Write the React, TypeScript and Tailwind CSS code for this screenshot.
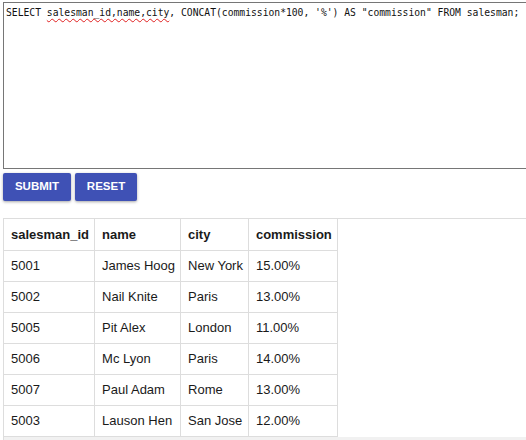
import React from "react";

const rows = [
  ["5001", "James Hoog", "New York", "15.00%"],
  ["5002", "Nail Knite", "Paris", "13.00%"],
  ["5005", "Pit Alex", "London", "11.00%"],
  ["5006", "Mc Lyon", "Paris", "14.00%"],
  ["5007", "Paul Adam", "Rome", "13.00%"],
  ["5003", "Lauson Hen", "San Jose", "12.00%"],
];

export default function App() {
  return (
    <div className="w-[526px] h-[440px] overflow-hidden bg-white" style={{ fontFamily: '"Liberation Sans", Arial, sans-serif' }}>
      <div className="pt-[2px] pl-[3px]">
        <div
          className="h-[167px] w-[560px] border border-[#767676] px-[2px] pt-[4px] text-[9.7px] leading-[11px] text-[#111] whitespace-pre"
          style={{ fontFamily: '"DejaVu Sans Mono", "Liberation Mono", monospace' }}
        >
          {"SELECT "}
          <span className="underline decoration-wavy decoration-[#e02020] decoration-[1px] underline-offset-[2px]">salesman_id,name,city</span>
          {", CONCAT(commission*100, '%') AS \"commission\" FROM salesman;"}
        </div>
        <div className="flex gap-[4px] mt-[4px]">
          <button className="h-[28px] w-[68px] rounded-[2px] bg-[#3f51b5] text-white text-[11.5px] font-bold shadow-[0_1px_3px_rgba(0,0,0,0.35)]" style={{ fontFamily: '"Liberation Sans", Arial, sans-serif' }}>
            SUBMIT
          </button>
          <button className="h-[28px] w-[62px] rounded-[2px] bg-[#3f51b5] text-white text-[11.5px] font-bold shadow-[0_1px_3px_rgba(0,0,0,0.35)]" style={{ fontFamily: '"Liberation Sans", Arial, sans-serif' }}>
            RESET
          </button>
        </div>
        <div className="mt-[17px] border-t border-l border-[#dddddd]">
          <table className="border-collapse text-[13px] text-[#1a1a1a]">
            <thead>
              <tr>
                {["salesman_id", "name", "city", "commission"].map((h) => (
                  <th key={h} className="text-left font-bold pl-[7px] pr-[5px] py-[8px] leading-[15px] border-r border-b border-[#dddddd]">
                    {h}
                  </th>
                ))}
              </tr>
            </thead>
            <tbody>
              {rows.map((r) => (
                <tr key={r[0]}>
                  {r.map((c, i) => (
                    <td key={i} className="text-left pl-[7px] pr-[5px] py-[8px] leading-[14px] border-r border-b border-[#dddddd] whitespace-nowrap">
                      {c}
                    </td>
                  ))}
                </tr>
              ))}
            </tbody>
          </table>
          <div className="h-[10px] bg-[#f1f1f1]" />
        </div>
      </div>
    </div>
  );
}
